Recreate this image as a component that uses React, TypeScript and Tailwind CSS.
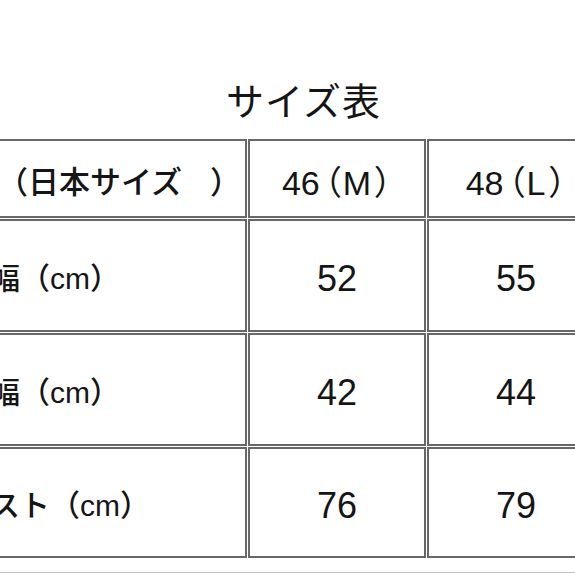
const font = { fontFamily: '"Liberation Sans", "Noto Sans CJK JP", sans-serif' };

const sizes = [
  { num: '46', letter: 'M' },
  { num: '48', letter: 'L' },
];

const rows = [
  { label: '肩幅（cm）', values: ['52', '55'] },
  { label: '身幅（cm）', values: ['42', '44'] },
  { label: 'バスト（cm）', values: ['76', '79'] },
];

export default function App() {
  return (
    <div className="w-[575px] h-[575px] overflow-hidden bg-white text-[#151515]" style={font}>
      {/* Title */}
      <div className="h-[138px] flex items-center justify-center pl-[32px] pt-[66px]">
        <h1 className="text-[38px] leading-none font-normal tracking-[1px]">サイズ表</h1>
      </div>

      {/* Table */}
      <div className="ml-[-201px] w-max p-[1px] grid grid-cols-[447px_178px_178px] grid-rows-[79px_113px_113px_111px] gap-[1px]">
        <div className="border-2 border-[#686868] flex items-center justify-end pt-[8px] pr-[4px]">
          <span className="text-[31px] leading-none font-medium whitespace-nowrap">
            イタリアサイズ（日本サイズ<span className="ml-[28px]">）</span>
          </span>
        </div>
        {sizes.map((s) => (
          <div key={s.num} className="border-2 border-[#686868] flex items-center justify-center pt-[8px]">
            <span className="text-[34px] leading-none whitespace-nowrap">
              {s.num}
              <span className="ml-[4px] [font-feature-settings:'palt']">（</span>
              <span className="ml-[2px]">{s.letter}</span>
              <span className="ml-[4px] [font-feature-settings:'palt']">）</span>
            </span>
          </div>
        ))}

        {rows.map((r) => (
          <>
            <div key={r.label} className="border-2 border-[#686868] flex items-center pl-[158px] pt-[6px]">
              <span className="text-[30px] leading-none font-medium whitespace-nowrap">{r.label}</span>
            </div>
            {r.values.map((v, i) => (
              <div key={r.label + i} className="border-2 border-[#686868] flex items-center justify-center pt-[6px]">
                <span className="text-[36px] leading-none">{v}</span>
              </div>
            ))}
          </>
        ))}
      </div>

      <div className="mt-[13px] h-px bg-[#c4c4c4]" />
    </div>
  );
}
